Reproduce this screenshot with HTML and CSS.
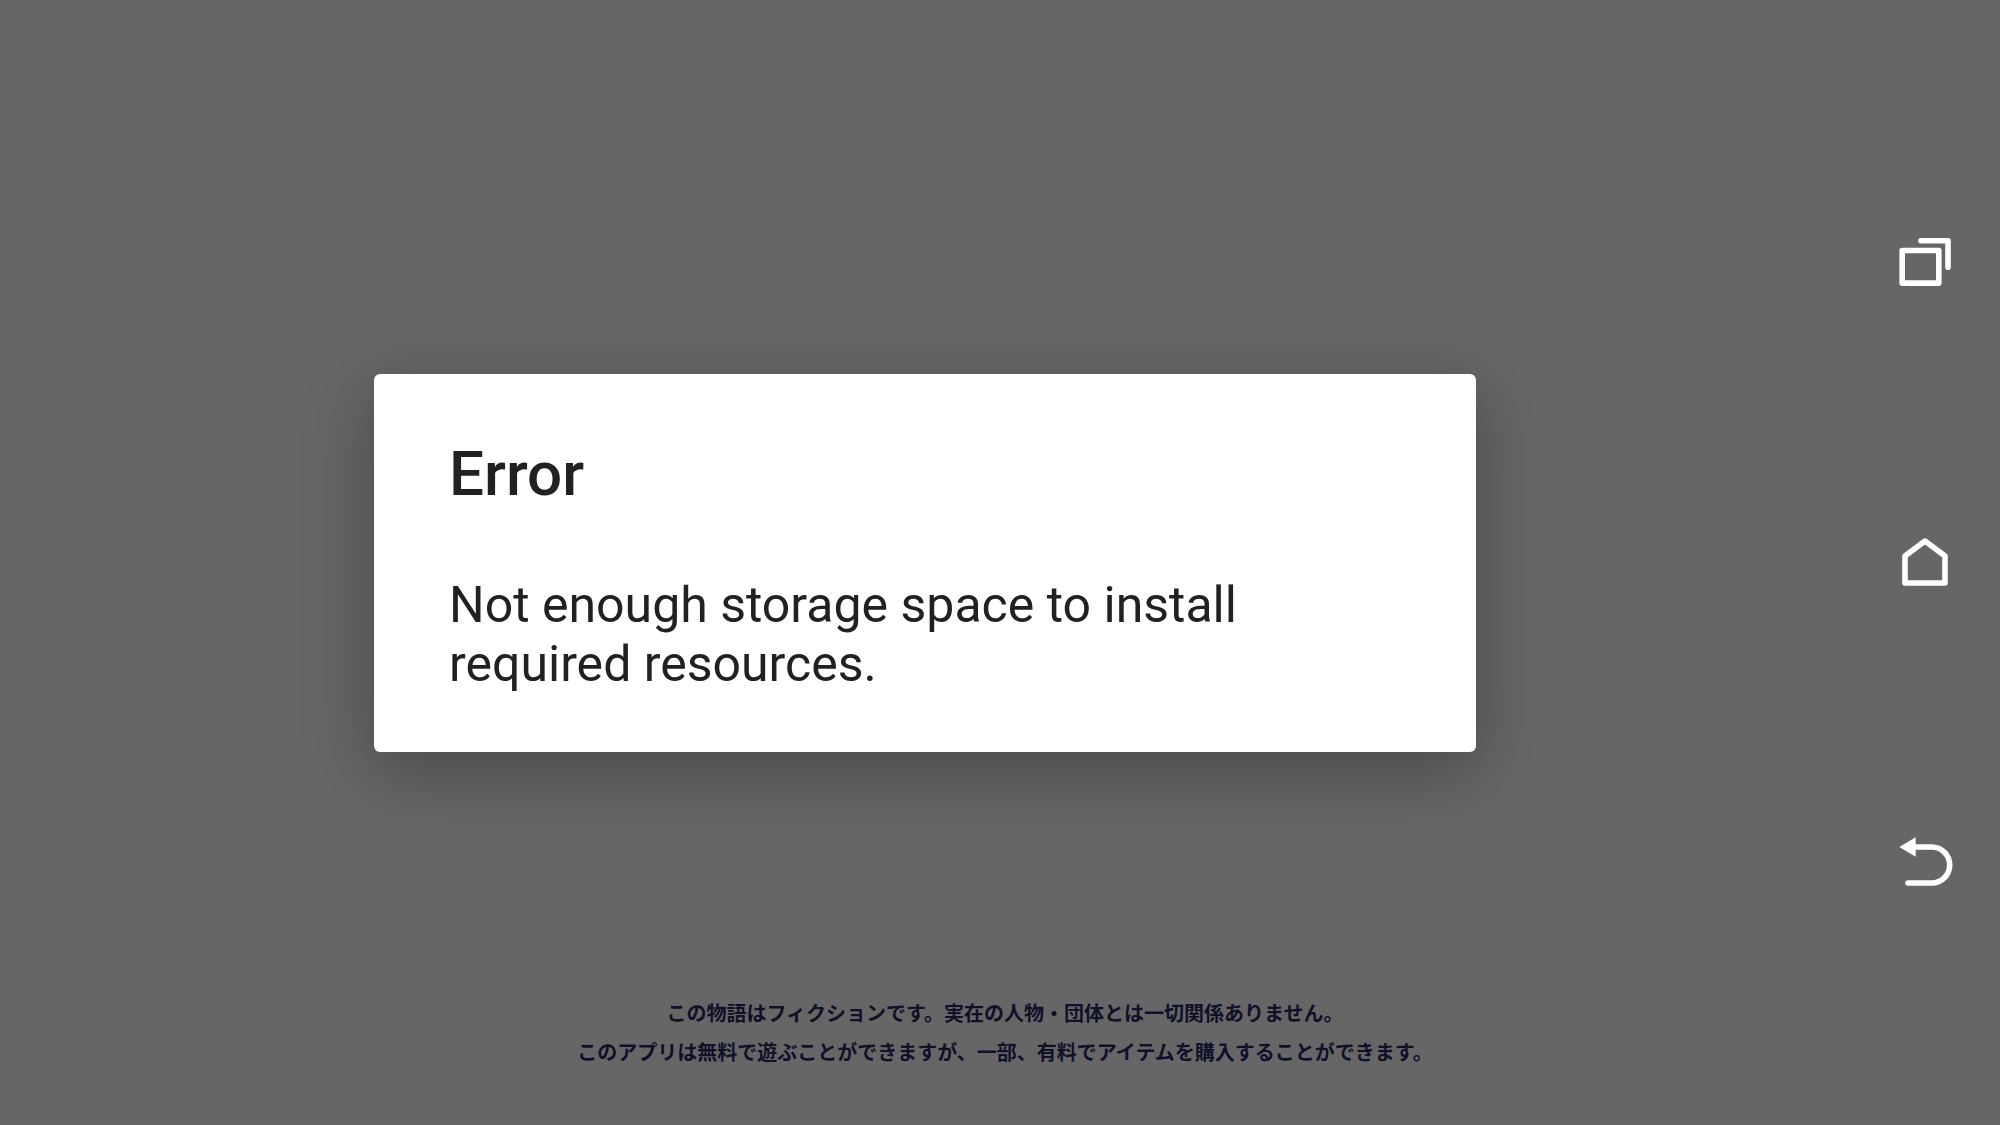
FILE: index.html
```html
<!DOCTYPE html>
<html lang="en">
<head>
<meta charset="utf-8">
<title>Error</title>
<link rel="stylesheet" href="styles.css">
</head>
<body>
<div class="screen">
  <main class="app">
    <section class="dialog" role="alertdialog" aria-labelledby="title" aria-describedby="message">
      <h1 class="title" id="title">Error</h1>
      <p class="message" id="message">Not enough storage space to install required resources.</p>
    </section>
  </main>
  <nav class="navbar" aria-label="System navigation">
    <button class="key" aria-label="Recent apps"><svg viewBox="0 0 60 61"><path d="M7.2 18.5h36.6v32.6H7.2zM26 8.8h27v26.4" /></svg></button>
    <button class="key" aria-label="Home"><svg viewBox="0 0 60 61"><path d="M10 24 30 9l20 15v27H10z" /></svg></button>
    <button class="key" aria-label="Back"><svg viewBox="0 0 60 61"><path d="M18 15h18.7a18 18 0 0 1 0 36H13" /><path class="solid" d="M4.3 15 20.7 5.2v19.6z" /></svg></button>
  </nav>
  <footer class="notice" lang="ja">
    <p>この物語はフィクションです。実在の人物・団体とは一切関係ありません。</p>
    <p>このアプリは無料で遊ぶことができますが、一部、有料でアイテムを購入することができます。</p>
  </footer>
</div>
</body>
</html>
```
FILE: styles.css
```css
* { box-sizing: border-box; }
body { margin: 0; background: #666; }
.screen {
  display: grid;
  grid-template-columns: 1fr 150px;
  grid-template-rows: 100vh;
  min-height: 100vh;
}
.app { grid-area: 1 / 1; display: grid; place-items: center; }
.dialog {
  width: 1102px;
  max-width: 92%;
  padding: 64px 75px 58px;
  background: #fff;
  border-radius: 6px;
  color: #212121;
  font-family: Roboto, sans-serif;
  box-shadow: 0 18px 72px rgba(0, 0, 0, .29);
}
.title { margin: 0 0 66px; font-size: 62px; line-height: 72px; font-weight: 500; }
.message { margin: 0; font-size: 50px; line-height: 59px; }
.navbar {
  grid-area: 1 / 2;
  display: flex;
  flex-direction: column;
  justify-content: center;
  align-items: center;
}
.key {
  display: grid;
  place-items: center;
  width: 100%;
  height: 300px;
  padding: 0;
  border: 0;
  background: none;
}
.key svg { width: 60px; height: 61px; fill: none; stroke: #fff; stroke-width: 5.6; stroke-linejoin: round; stroke-linecap: round; }
.key .solid { fill: #fff; stroke: none; }
.notice {
  grid-area: 1 / 1 / 2 / 3;
  align-self: end;
  padding: 0 0 54px 10px;
  pointer-events: none;
  text-align: center;
  color: #101028;
  font: 700 20px/39px "Noto Sans CJK JP", sans-serif;
}
.notice p { margin: 0; }
```
